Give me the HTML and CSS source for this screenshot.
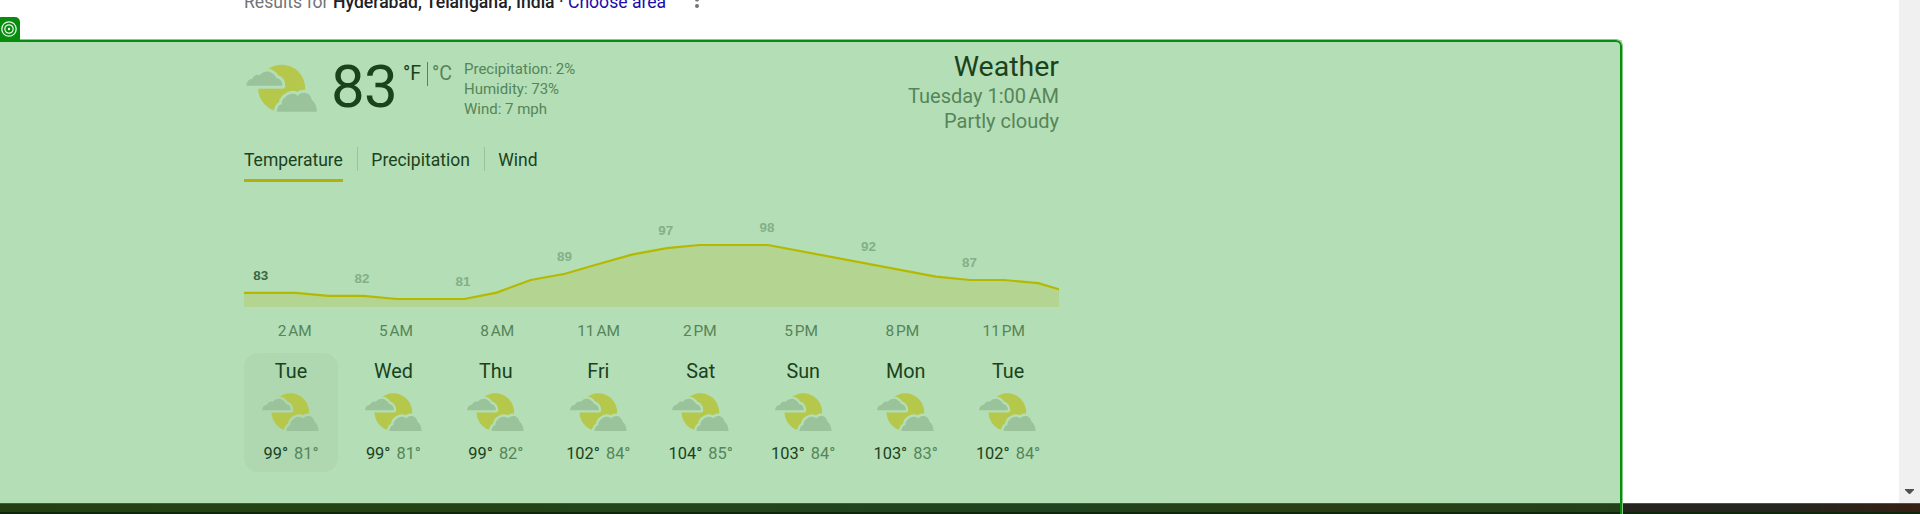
FILE: index.html
```html
<!DOCTYPE html>
<html lang="en">
<head>
<meta charset="utf-8">
<title>Weather</title>
<link rel="stylesheet" href="styles.css">
</head>
<body>
<svg class="defs" width="0" height="0" aria-hidden="true">
  <defs>
    <path id="cloud-a" d="M4 68C5 56 12 48 22 48C26 38 36 32 45 37C53 25 70 22 82 31C89 35 92 41 94 45C105 46 112 55 112 68Z"/>
    <path id="cloud-b" d="M95 146C97 133 101 126 110 124C110 109 122 98 137 93C147 91 154 94 158 99C169 84 196 86 201 112C210 117 215 131 216 146Z"/>
    <mask id="bite" maskUnits="userSpaceOnUse" x="0" y="0" width="222" height="150">
      <rect width="222" height="150" fill="#fff"/>
      <use href="#cloud-a" fill="#000" stroke="#000" stroke-width="18" stroke-linejoin="round"/>
      <use href="#cloud-b" fill="#000" stroke="#000" stroke-width="18" stroke-linejoin="round"/>
    </mask>
    <symbol id="partly" viewBox="0 0 222 150">
      <circle cx="110" cy="75.500" r="70.500" fill="#b5c84b" mask="url(#bite)"/>
      <use href="#cloud-a" fill="#9ac39c"/>
      <use href="#cloud-b" fill="#9ac39c"/>
    </symbol>
  </defs>
</svg>
<div class="screen">
  <div class="window">
    <main class="page">
      <header class="results">
        <span class="muted">Results for&nbsp;</span><b>Hyderabad, Telangana, India</b><span>&nbsp;·&nbsp;</span><a class="link">Choose area</a>
        <svg class="dots" width="6" height="20" viewBox="0 0 6 20"><circle cx="3" cy="3" r="2"/><circle cx="3" cy="9.500" r="2"/><circle cx="3" cy="16" r="2"/></svg>
      </header>
      <section class="panel">
        <div class="card">
          <div class="now">
            <svg class="now-icon"><use href="#partly"/></svg>
            <div class="temp">83</div>
            <div class="units"><span class="f">°F</span><span class="c">°C</span></div>
            <div class="facts"><div>Precipitation: 2%</div><div>Humidity: 73%</div><div>Wind: 7 mph</div></div>
            <div class="summary">
              <div class="title">Weather</div>
              <div>Tuesday 1:00&#8239;AM</div>
              <div>Partly cloudy</div>
            </div>
          </div>
          <nav class="tabs"><span class="tab active">Temperature</span><i></i><span class="tab">Precipitation</span><i></i><span class="tab">Wind</span></nav>
          <svg class="chart" width="815" height="92" viewBox="244 215 815 92">
            <path class="area" d="M244 292.800H295.700L328.300 295.800H363.300L396.700 299H464.300L496.700 292.600L530.700 280L565 273.800L597.700 264.300L631.700 254.600L666.700 248.100L699.300 245H768L936 276.600L970 280H1004L1038.300 283.100L1059 289.300V307H244Z"/>
            <path class="line" d="M244 292.800H295.700L328.300 295.800H363.300L396.700 299H464.300L496.700 292.600L530.700 280L565 273.800L597.700 264.300L631.700 254.600L666.700 248.100L699.300 245H768L936 276.600L970 280H1004L1038.300 283.100L1059 289.300"/>
            <g class="values">
              <text class="first" x="260.700" y="280">83</text><text x="362" y="283">82</text><text x="463" y="286">81</text><text x="564.500" y="261">89</text><text x="665.700" y="235">97</text><text x="767" y="232">98</text><text x="868.500" y="251">92</text><text x="969.500" y="267">87</text>
            </g>
          </svg>
          <div class="hours"><span>2&#8239;AM</span><span>5&#8239;AM</span><span>8&#8239;AM</span><span>11&#8239;AM</span><span>2&#8239;PM</span><span>5&#8239;PM</span><span>8&#8239;PM</span><span>11&#8239;PM</span></div>
          <div class="days">
            <div class="day selected"><span class="name">Tue</span><svg><use href="#partly"/></svg><span class="range"><span>99°</span><span class="low">81°</span></span></div>
            <div class="day"><span class="name">Wed</span><svg><use href="#partly"/></svg><span class="range"><span>99°</span><span class="low">81°</span></span></div>
            <div class="day"><span class="name">Thu</span><svg><use href="#partly"/></svg><span class="range"><span>99°</span><span class="low">82°</span></span></div>
            <div class="day"><span class="name">Fri</span><svg><use href="#partly"/></svg><span class="range"><span>102°</span><span class="low">84°</span></span></div>
            <div class="day"><span class="name">Sat</span><svg><use href="#partly"/></svg><span class="range"><span>104°</span><span class="low">85°</span></span></div>
            <div class="day"><span class="name">Sun</span><svg><use href="#partly"/></svg><span class="range"><span>103°</span><span class="low">84°</span></span></div>
            <div class="day"><span class="name">Mon</span><svg><use href="#partly"/></svg><span class="range"><span>103°</span><span class="low">83°</span></span></div>
            <div class="day"><span class="name">Tue</span><svg><use href="#partly"/></svg><span class="range"><span>102°</span><span class="low">84°</span></span></div>
          </div>
        </div>
      </section>
    </main>
    <aside class="scrollbar"><svg width="9" height="5" viewBox="0 0 9 5"><path d="M0 0H9V1L5 5H4L0 1Z" fill="#505050"/></svg></aside>
  </div>
  <footer class="taskbar"></footer>
  <div class="outline"></div>
  <div class="badge"><svg width="18" height="18" viewBox="0 0 18 18" fill="none" stroke="#e8f6e8"><circle cx="9" cy="9" r="7.200" stroke-width="1.300"/><circle cx="9" cy="9" r="4.200" stroke-width="1.200"/><circle cx="9" cy="9" r="1.200" fill="#fff" stroke="none"/></svg></div>
</div>
</body>
</html>
```
FILE: styles.css
```css
* { box-sizing: border-box; }
body { margin: 0; background: #fff; font-family: Roboto, "Liberation Sans", sans-serif; }
.defs { position: absolute; }
.screen { position: relative; display: flex; flex-direction: column; width: 1920px; height: 514px; overflow: hidden; }
.window { display: flex; height: 503px; }
.page { width: 1899px; }
.scrollbar { flex: 1; display: flex; align-items: flex-end; justify-content: center; padding-bottom: 9px; background: #f0f0f0; }

.results { display: flex; height: 40px; padding-left: 244px; margin-top: -10px; margin-bottom: 10px; line-height: 24px; font-size: 17.6px; color: #202124; white-space: nowrap; }
.results b { font-weight: 500; }
.muted { color: #70757a; }
.link { color: #1a0dab; }
.dots { margin: 0 0 0 28px; fill: #70757a; }

.panel { width: 1622px; height: 463px; padding-left: 244px; background: #b4deb5; color: #1a421d; }
.card { width: 815px; }
.now { display: flex; height: 100px; color: #55855a; }
.now-icon { width: 74px; height: 50px; margin: 23px 0 0 1px; }
.temp { width: 71px; margin: 14px 0 0 12px; font-size: 60px; line-height: 66px; letter-spacing: -0.8px; color: #1a421d; }
.units { display: flex; height: 24px; margin: 22px 0 0 1px; font-size: 19.500px; line-height: 24px; }
.f { width: 25px; border-right: 1px solid #55855a; color: #1a421d; }
.c { width: 25px; padding-left: 4px; }
.facts { margin: 19px 0 0 11px; font-size: 15px; line-height: 20px; }
.summary { margin: 11px 0 0 auto; font-size: 20px; line-height: 25px; text-align: right; }
.title { height: 33px; font-size: 28.500px; line-height: 32px; color: #1a421d; }

.tabs { display: flex; height: 75px; padding-top: 7px; font-size: 17.500px; line-height: 26px; }
.tabs i { width: 1px; height: 24px; margin: 0 13.500px 0 14px; background: #9ac39c; }
.tab { height: 35px; }
.active { border-bottom: 3px solid #b4b00a; }

.chart { display: block; }
.area { fill: #b4d491; }
.line { fill: none; stroke: #b4b900; stroke-width: 2.200; }
.values { font-family: "Liberation Sans", Roboto, sans-serif; font-size: 13.400px; font-weight: 700; fill: #83b087; text-anchor: middle; }
.first { fill: #3b673f; }
.hours { display: grid; grid-template-columns: repeat(8, 101.300px); height: 46px; padding-top: 14px; font-size: 15.400px; line-height: 20px; text-align: center; color: #55855a; }

.days { display: flex; gap: 8.450px; }
.day { display: flex; flex-direction: column; align-items: center; flex: none; width: 94px; height: 119px; padding-top: 7px; border-radius: 14px; font-size: 15.400px; }
.selected { background: #afd8b1; }
.name { height: 32px; font-size: 19.800px; line-height: 24px; }
.day svg { width: 59.200px; height: 40px; }
.range { display: flex; gap: 6px; margin-top: 12px; line-height: 20px; font-size: 16.400px; }
.low { color: #55855a; }

.taskbar { height: 11px; border-top: 1px solid #3a6237; background: linear-gradient(90deg, #244012 0, #234313 400px, #24441b 650px, #1f4320 1060px, #294013 1260px, #24401a 1621px, #27231f 1621px, #25261f 1780px, #372113 1919px); box-shadow: inset 0 -2px #0d260c; }
.outline { position: absolute; left: -6px; top: 40px; width: 1628px; height: 490px; border: 2px solid #078c0d; border-radius: 6px; outline: 1px solid #86c98a; }
.badge { position: absolute; left: 0; top: 17px; width: 20px; height: 23px; padding: 2.500px 0 0 0; background: #078c0d; border-top-right-radius: 5px; }
.badge svg { display: block; }
```
